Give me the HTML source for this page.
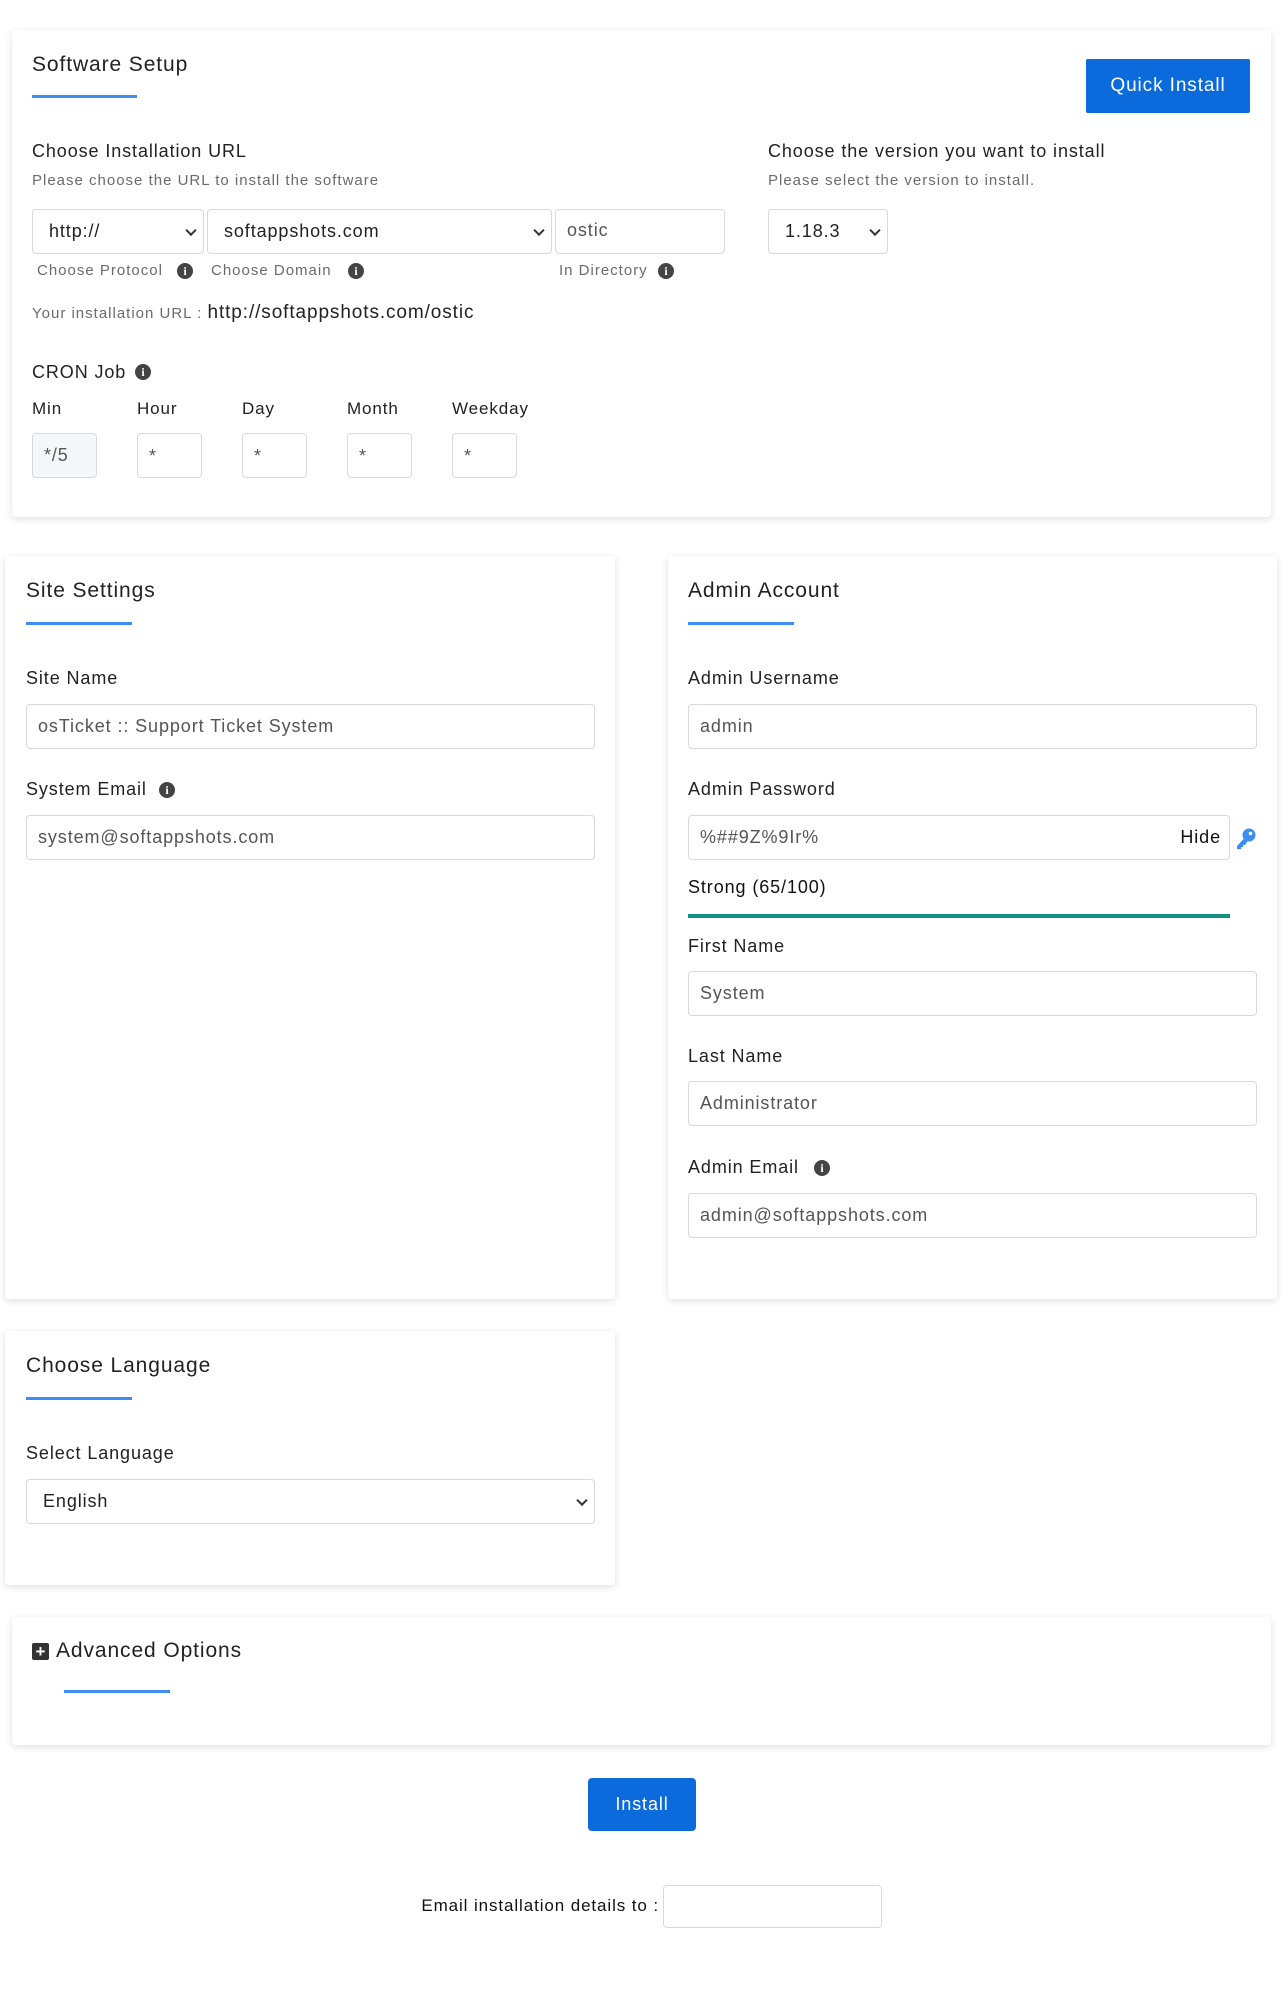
<!DOCTYPE html>
<html><head><meta charset="utf-8">
<style>
*{box-sizing:border-box;margin:0;padding:0}
body{width:1281px;height:2000px;background:#fff;position:relative;font-family:"Liberation Sans",sans-serif;color:#222;overflow:hidden;letter-spacing:0.9px}
#w{position:absolute;left:0;top:0;width:1281px;height:2000px;transform:translate(-1px,-1px)}
.card{position:absolute;background:#fff;border-radius:4px;box-shadow:0 2px 8px rgba(0,0,0,.13)}
.t{position:absolute;white-space:nowrap;line-height:24px}
.h{font-size:21px;color:#222}
.ul{position:absolute;height:3px;background:#3d8ef0}
.lbl{font-size:18px;color:#222}
.sub{font-size:15px;color:#6b6b6b;letter-spacing:1px}
.box{position:absolute;border:1px solid #d6d9de;border-radius:4px;background:#fff;font-size:18px;color:#555;padding-left:11px;display:flex;align-items:center}
.sel{color:#222;padding-left:16px}
.chev{position:absolute;right:8px;top:50%;width:8px;height:8px;border-right:2px solid #333;border-bottom:2px solid #333;transform:translateY(-70%) rotate(45deg)}
.i{position:absolute;width:16px;height:16px;border-radius:50%;background:#444;color:#fff;font:bold 12px/16px "Liberation Serif",serif;text-align:center;letter-spacing:0}
.btn{position:absolute;background:#0b6bdc;color:#fff;font-size:19px;display:flex;align-items:center;justify-content:center;border-radius:2px}
</style></head><body><div id="w">

<div class="card" style="left:13px;top:31px;width:1259px;height:487px"></div>
<div class="t h" style="left:33px;top:54px">Software Setup</div>
<div class="ul" style="left:33px;top:96px;width:105px"></div>
<div class="btn" style="left:1087px;top:60px;width:164px;height:54px">Quick Install</div>

<div class="t lbl" style="left:33px;top:140px">Choose Installation URL</div>
<div class="t sub" style="left:33px;top:170px">Please choose the URL to install the software</div>
<div class="box sel" style="left:33px;top:210px;width:172px;height:45px;padding-left:16px">http://<span class="chev"></span></div>
<div class="box sel" style="left:208px;top:210px;width:345px;height:45px">softappshots.com<span class="chev"></span></div>
<div class="box" style="left:556px;top:210px;width:170px;height:45px;padding-bottom:3px">ostic</div>
<div class="t sub" style="left:38px;top:260px">Choose Protocol</div><div class="i" style="left:178px;top:264px">i</div>
<div class="t sub" style="left:212px;top:260px">Choose Domain</div><div class="i" style="left:349px;top:264px">i</div>
<div class="t sub" style="left:560px;top:260px">In Directory</div><div class="i" style="left:659px;top:264px">i</div>
<div class="t sub" style="left:33px;top:302px">Your installation URL : <span style="font-size:19px;color:#222;letter-spacing:0.9px">http://softappshots.com/ostic</span></div>

<div class="t lbl" style="left:769px;top:140px">Choose the version you want to install</div>
<div class="t sub" style="left:769px;top:170px">Please select the version to install.</div>
<div class="box sel" style="left:769px;top:210px;width:120px;height:45px">1.18.3<span class="chev"></span></div>

<div class="t lbl" style="left:33px;top:361px">CRON Job</div><div class="i" style="left:136px;top:365px">i</div>
<div class="t lbl" style="left:33px;top:398px;font-size:17px">Min</div>
<div class="t lbl" style="left:138px;top:398px;font-size:17px">Hour</div>
<div class="t lbl" style="left:243px;top:398px;font-size:17px">Day</div>
<div class="t lbl" style="left:348px;top:398px;font-size:17px">Month</div>
<div class="t lbl" style="left:453px;top:398px;font-size:17px">Weekday</div>
<div class="box" style="left:33px;top:434px;width:65px;height:45px;background:#f5f7fa">*/5</div>
<div class="box" style="left:138px;top:434px;width:65px;height:45px;align-items:flex-start;padding-top:12px">*</div>
<div class="box" style="left:243px;top:434px;width:65px;height:45px;align-items:flex-start;padding-top:12px">*</div>
<div class="box" style="left:348px;top:434px;width:65px;height:45px;align-items:flex-start;padding-top:12px">*</div>
<div class="box" style="left:453px;top:434px;width:65px;height:45px;align-items:flex-start;padding-top:12px">*</div>

<div class="card" style="left:6px;top:557px;width:610px;height:743px"></div>
<div class="t h" style="left:27px;top:580px">Site Settings</div>
<div class="ul" style="left:27px;top:623px;width:106px"></div>
<div class="t lbl" style="left:27px;top:667px">Site Name</div>
<div class="box" style="left:27px;top:705px;width:569px;height:45px">osTicket :: Support Ticket System</div>
<div class="t lbl" style="left:27px;top:778px">System Email</div><div class="i" style="left:160px;top:783px">i</div>
<div class="box" style="left:27px;top:816px;width:569px;height:45px">system@softappshots.com</div>

<div class="card" style="left:669px;top:557px;width:609px;height:743px"></div>
<div class="t h" style="left:689px;top:580px">Admin Account</div>
<div class="ul" style="left:689px;top:623px;width:106px"></div>
<div class="t lbl" style="left:689px;top:667px">Admin Username</div>
<div class="box" style="left:689px;top:705px;width:569px;height:45px">admin</div>
<div class="t lbl" style="left:689px;top:778px">Admin Password</div>
<div class="box" style="left:689px;top:816px;width:542px;height:45px">%##9Z%9Ir%<span style="position:absolute;right:8px;color:#111">Hide</span></div>
<svg style="position:absolute;left:1235px;top:828px" width="24" height="24" viewBox="0 0 24 24"><circle cx="15" cy="8" r="6.5" fill="#3d8ef0"/><circle cx="16.5" cy="6.5" r="1.8" fill="#fff"/><path d="M10.5 11 L3 19 L3 22 L7 22 L7 20 L9 20 L9 18 L11 18 L13.5 14.5Z" fill="#3d8ef0"/></svg>
<div class="t lbl" style="left:689px;top:876px;color:#111">Strong (65/100)</div>
<div style="position:absolute;left:689px;top:915px;width:542px;height:4px;background:#11917f"></div>
<div class="t lbl" style="left:689px;top:935px">First Name</div>
<div class="box" style="left:689px;top:972px;width:569px;height:45px">System</div>
<div class="t lbl" style="left:689px;top:1045px">Last Name</div>
<div class="box" style="left:689px;top:1082px;width:569px;height:45px">Administrator</div>
<div class="t lbl" style="left:689px;top:1156px">Admin Email</div><div class="i" style="left:815px;top:1161px">i</div>
<div class="box" style="left:689px;top:1194px;width:569px;height:45px">admin@softappshots.com</div>

<div class="card" style="left:6px;top:1332px;width:610px;height:254px"></div>
<div class="t h" style="left:27px;top:1355px">Choose Language</div>
<div class="ul" style="left:27px;top:1398px;width:106px"></div>
<div class="t lbl" style="left:27px;top:1442px">Select Language</div>
<div class="box sel" style="left:27px;top:1480px;width:569px;height:45px">English<span class="chev"></span></div>

<div class="card" style="left:13px;top:1618px;width:1259px;height:128px"></div>
<div style="position:absolute;left:33px;top:1644px;width:17px;height:17px;background:#333;border-radius:2px;color:#fff;font:bold 17px/17px 'Liberation Sans',sans-serif;text-align:center;letter-spacing:0">+</div>
<div class="t h" style="left:57px;top:1640px">Advanced Options</div>
<div class="ul" style="left:65px;top:1691px;width:106px"></div>

<div class="btn" style="left:589px;top:1779px;width:108px;height:53px;border-radius:4px;font-size:18px">Install</div>
<div class="t lbl" style="right:621px;top:1895px;font-size:17px;color:#111">Email installation details to :</div>
<div class="box" style="left:664px;top:1886px;width:219px;height:43px"></div>
</div></body></html>
